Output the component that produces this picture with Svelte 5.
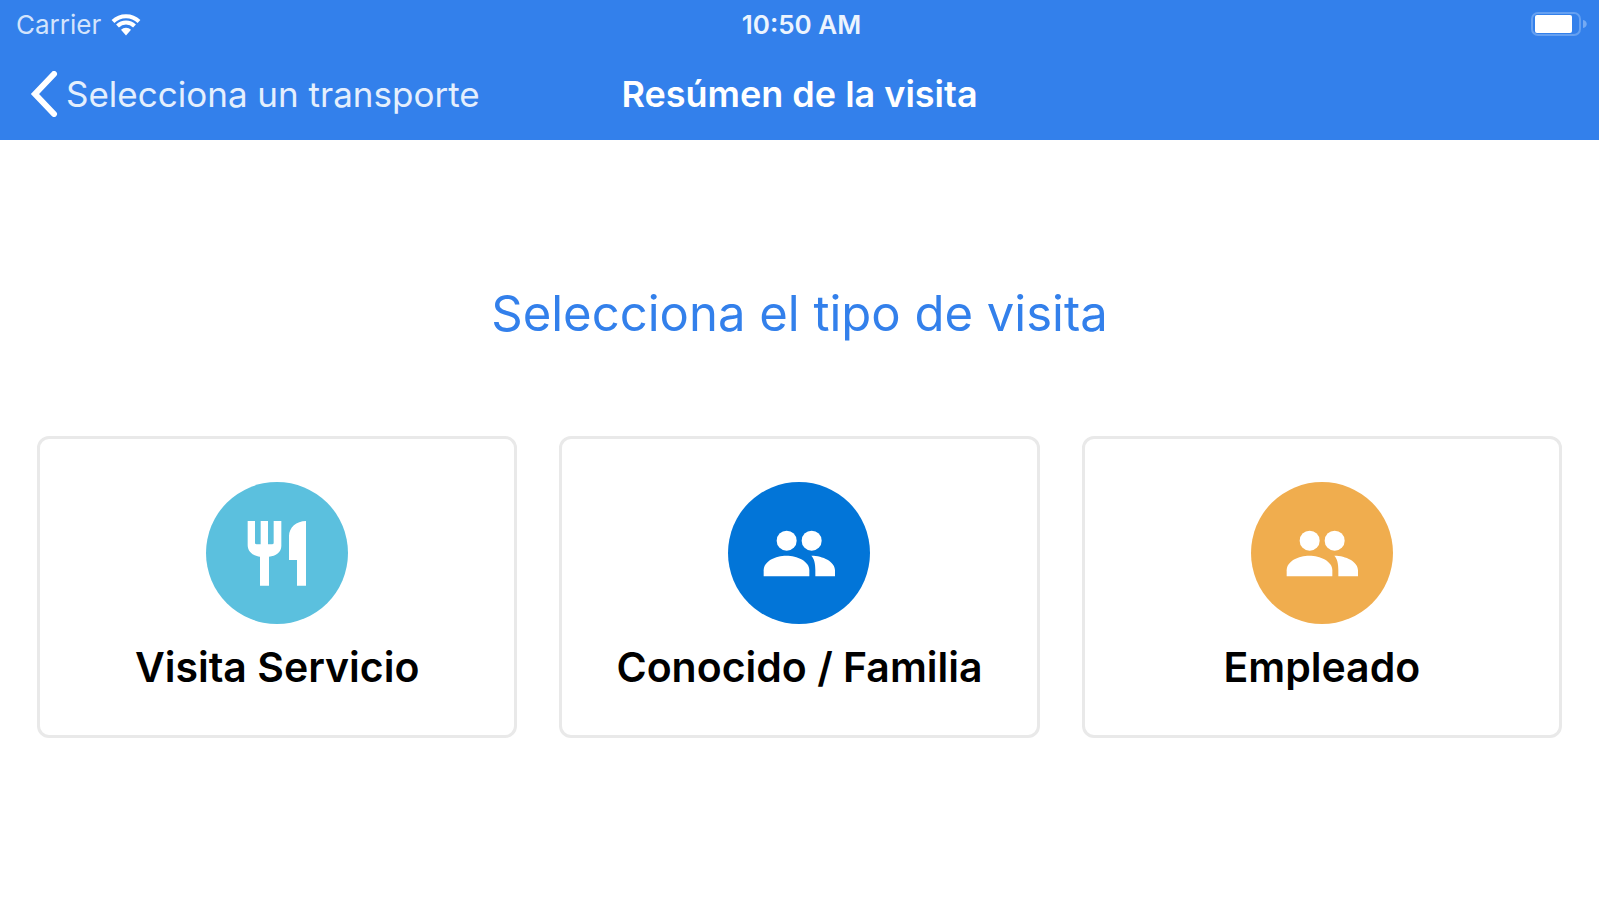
<script lang="ts">
	type Icon = 'food' | 'people';

	interface VisitType {
		label: string;
		icon: Icon;
		tone: string;
	}

	const visitTypes: VisitType[] = [
		{ label: 'Visita Servicio', icon: 'food', tone: 'info' },
		{ label: 'Conocido / Familia', icon: 'people', tone: 'primary' },
		{ label: 'Empleado', icon: 'people', tone: 'warning' }
	];
</script>

<header class="header">
	<div class="status-bar">
		<div class="carrier">
			<span>Carrier</span>
			<svg class="wifi" viewBox="0 0 30 23" aria-hidden="true">
				<path d="M2 8.5a18.5 18.5 0 0 1 26 0" />
				<path d="M6.5 13a12 12 0 0 1 17 0" />
				<path class="wifi-dot" d="M10 16.8a7 7 0 0 1 10 0L15 22.5z" />
			</svg>
		</div>
		<span class="time">10:50 AM</span>
		<svg class="battery" viewBox="0 0 56 24" aria-hidden="true">
			<rect class="battery-case" x="1" y="1" width="48" height="22" rx="6" />
			<rect x="4" y="3" width="37" height="18" rx="2" />
			<path class="battery-tip" d="M52 8c5 1 5 7 0 8z" />
		</svg>
	</div>

	<nav class="nav-bar">
		<button class="back" type="button">
			<svg class="chevron" viewBox="0 0 28 46" aria-hidden="true">
				<path d="M24 3L5 23l19 20" />
			</svg>
			<span>Selecciona un transporte</span>
		</button>
		<h1 class="nav-title">Resúmen de la visita</h1>
	</nav>
</header>

<main class="content">
	<h2 class="heading">Selecciona el tipo de visita</h2>

	<div class="cards">
		{#each visitTypes as visit}
			<button class="card" type="button">
				<svg class="icon {visit.tone}" viewBox="0 0 426 426" aria-hidden="true">
					{#if visit.icon === 'food'}
						<path d="M125 117h22v66q0 4 5 4h12v-70h22v70h12q5 0 5-4v-66h23v75c0 19-17 31-37 32v87h-27v-87c-20-1-37-15-37-34z" />
						<path d="M300 117v194h-27v-77h-24v-72c0-25 22-45 51-45z" />
					{:else}
						<circle cx="176" cy="176" r="30" />
						<circle cx="251" cy="176" r="30" />
						<path d="M107 283v-18c0-28 36-44 68-44s69 16 69 44v18z" />
						<path d="M250 221c35 0 71 18 71 44v18h-59v-18c0-20-3-34-12-44z" />
					{/if}
				</svg>
				<span class="label">{visit.label}</span>
			</button>
		{/each}
	</div>
</main>

<style>
	:global(body) {
		background: #fff;
		font-family: Inter, 'Liberation Sans', sans-serif;
	}

	button {
		margin: 0;
		border: 0;
		background: none;
		color: inherit;
		font: inherit;
		cursor: pointer;
	}

	.header {
		background: #3380eb;
		color: #fff;
	}

	.status-bar {
		display: grid;
		grid-template-columns: 1fr auto 1fr;
		align-items: center;
		height: 48px;
		padding: 0 12px 0 16px;
		font-size: 26px;
	}

	.carrier {
		display: flex;
		align-items: center;
		gap: 10px;
		color: #d3e4fc;
	}

	.wifi {
		width: 30px;
		height: 23px;
		fill: none;
		stroke: #fff;
		stroke-width: 4;
	}

	.wifi-dot {
		fill: #fff;
		stroke: none;
	}

	.time {
		font-weight: 600;
		color: #ecf4fe;
	}

	.battery {
		justify-self: end;
		width: 56px;
		height: 24px;
		fill: #fff;
	}

	.battery-case {
		fill: none;
		stroke: #65a0f1;
		stroke-width: 2;
	}

	.battery-tip {
		fill: #75aaf3;
	}

	.nav-bar {
		display: grid;
		grid-template-columns: 1fr auto 1fr;
		align-items: center;
		height: 92px;
		padding: 0 30px;
	}

	.back {
		display: flex;
		align-items: center;
		justify-self: start;
		gap: 8px;
		padding: 0;
		color: #e4effd;
		font-size: 35px;
		white-space: nowrap;
	}

	.chevron {
		width: 28px;
		height: 46px;
		fill: none;
		stroke: #fff;
		stroke-width: 6;
		stroke-linecap: round;
	}

	.nav-title {
		margin: 0;
		font-size: 36px;
		font-weight: 600;
	}

	.content {
		padding: 142px 37px 40px;
	}

	.heading {
		margin: 0 0 90px;
		color: #3380eb;
		font-size: 49px;
		font-weight: 400;
		line-height: 64px;
		text-align: center;
	}

	.cards {
		display: grid;
		grid-template-columns: repeat(3, 1fr);
		gap: 42px;
	}

	.card {
		display: flex;
		flex-direction: column;
		align-items: center;
		gap: 18px;
		padding: 43px 16px;
		border: 3px solid #e9e9e9;
		border-radius: 12px;
		color: #000;
	}

	.icon {
		width: 142px;
		height: 142px;
		border-radius: 50%;
		fill: #fff;
	}

	.info {
		background: #5bc0de;
	}

	.primary {
		background: #0275d8;
	}

	.warning {
		background: #f0ad4e;
	}

	.label {
		font-size: 41px;
		font-weight: 600;
		line-height: 50px;
	}
</style>
